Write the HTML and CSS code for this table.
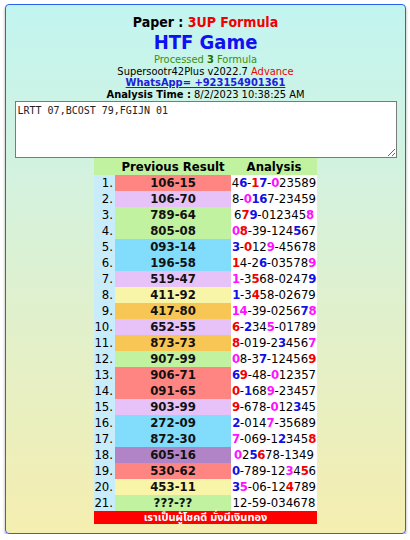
FILE: index.html
```html
<!DOCTYPE html>
<html>
<head>
<meta charset="utf-8">
<link rel="stylesheet" href="styles.css">
</head>
<body>
<div class="card">
  <div class="head">
    <div class="paper">Paper : <span class="red">3UP Formula</span></div>
    <div class="title">HTF Game</div>
    <div class="line green">Processed <b class="dg">3</b> Formula</div>
    <div class="line">Supersootr42Plus v2022.7 <span class="red">Advance</span></div>
    <div class="line"><a class="wa" href="#">WhatsApp= +923154901361</a></div>
    <div class="line"><b>Analysis Time :</b> 8/2/2023 10:38:25 AM</div>
  </div>
  <textarea class="box">LRTT 07,BCOST 79,FGIJN 01</textarea>
  <table class="tbl">
    <colgroup><col class="cn"><col class="cr"><col class="ca"></colgroup>
    <thead>
      <tr><th class="n"></th><th class="res">Previous Result</th><th class="an">Analysis</th></tr>
    </thead>
    <tbody>
      <tr><td class="n">1.</td><td class="res c-sal">106-15</td><td class="an">4<b class="b">6</b>-<b class="r">1</b><b class="b">7</b>-<b class="m">0</b>23589</td></tr>
      <tr><td class="n">2.</td><td class="res c-lav">106-70</td><td class="an">8-<b class="m">0</b><b class="b">16</b>7-23459</td></tr>
      <tr><td class="n">3.</td><td class="res c-grn">789-64</td><td class="an">6<b class="r">7</b><b class="b">9</b>-012345<b class="m">8</b></td></tr>
      <tr><td class="n">4.</td><td class="res c-grn">805-08</td><td class="an"><b class="m">0</b><b class="r">8</b>-39-124<b class="b">5</b>67</td></tr>
      <tr><td class="n">5.</td><td class="res c-blu">093-14</td><td class="an"><b class="b">3</b>-<b class="r">0</b>12<b class="m">9</b>-45678</td></tr>
      <tr><td class="n">6.</td><td class="res c-blu">196-58</td><td class="an"><b class="r">1</b>4-2<b class="b">6</b>-03578<b class="m">9</b></td></tr>
      <tr><td class="n">7.</td><td class="res c-lav">519-47</td><td class="an"><b class="m">1</b>-3<b class="r">5</b>68-0247<b class="b">9</b></td></tr>
      <tr><td class="n">8.</td><td class="res c-yel">411-92</td><td class="an"><b class="b">1</b>-3<b class="r">4</b>58-02679</td></tr>
      <tr><td class="n">9.</td><td class="res c-org">417-80</td><td class="an"><b class="m">14</b>-39-0256<b class="b">7</b><b class="m">8</b></td></tr>
      <tr><td class="n">10.</td><td class="res c-lav">652-55</td><td class="an"><b class="r">6</b>-<b class="b">2</b>34<b class="m">5</b>-01789</td></tr>
      <tr><td class="n">11.</td><td class="res c-org">873-73</td><td class="an"><b class="r">8</b>-019-2<b class="b">3</b>456<b class="m">7</b></td></tr>
      <tr><td class="n">12.</td><td class="res c-grn">907-99</td><td class="an"><b class="m">0</b>8-3<b class="b">7</b>-12456<b class="r">9</b></td></tr>
      <tr><td class="n">13.</td><td class="res c-sal">906-71</td><td class="an"><b class="b">6</b><b class="r">9</b>-48-<b class="m">0</b>12357</td></tr>
      <tr><td class="n">14.</td><td class="res c-sal">091-65</td><td class="an"><b class="r">0</b>-<b class="b">1</b>68<b class="m">9</b>-23457</td></tr>
      <tr><td class="n">15.</td><td class="res c-lav">903-99</td><td class="an"><b class="r">9</b>-678-<b class="m">0</b>12<b class="b">3</b>45</td></tr>
      <tr><td class="n">16.</td><td class="res c-blu">272-09</td><td class="an"><b class="b">2</b>-014<b class="m">7</b>-35689</td></tr>
      <tr><td class="n">17.</td><td class="res c-blu">872-30</td><td class="an"><b class="m">7</b>-069-1<b class="b">2</b>345<b class="r">8</b></td></tr>
      <tr><td class="n">18.</td><td class="res c-pur">605-16</td><td class="an"><b class="m">0</b>2<b class="b">5</b><b class="r">6</b>78-1349</td></tr>
      <tr><td class="n">19.</td><td class="res c-sal">530-62</td><td class="an"><b class="b">0</b>-789-12<b class="m">3</b>4<b class="r">5</b>6</td></tr>
      <tr><td class="n">20.</td><td class="res c-yel">453-11</td><td class="an"><b class="b">3</b><b class="m">5</b>-06-12<b class="r">4</b>789</td></tr>
      <tr><td class="n">21.</td><td class="res c-grn">???-??</td><td class="an">12-59-034678</td></tr>
      <tr><td class="foot" colspan="3">เราเป็นผู้โชคดี มั่งมีเงินทอง</td></tr>
    </tbody>
  </table>
</div>
</body>
</html>
```
FILE: styles.css
```css
html, body {
  margin: 0;
  padding: 0;
  background: #ffffff;
}
body {
  font-family: "DejaVu Sans Condensed", "DejaVu Sans", sans-serif;
  font-stretch: condensed;
  color: #000;
}
.card {
  margin: 4px 5px 0 5px;
  width: 399px;
  border: 1px solid #2a62f0;
  border-radius: 4px;
  background: linear-gradient(to bottom, #c2f5f0 0%, #d2f2e0 30%, #f5eeb0 100%);
  box-shadow: 0 2px 3px rgba(0, 0, 0, 0.35);
  padding: 9px 0 9px 0;
  display: flex;
  flex-direction: column;
  align-items: center;
}
.head {
  text-align: center;
  width: 100%;
}
.paper {
  font-size: 14px;
  font-weight: bold;
  line-height: 17px;
}
.red {
  color: #f00000;
}
.title {
  font-size: 20px;
  font-weight: bold;
  color: #1010f0;
  line-height: 23px;
}
.line {
  font-size: 11px;
  line-height: 11.5px;
}
.green {
  color: #3a9010;
}
.dg {
  color: #1e6e00;
}
.wa {
  color: #2020d8;
  font-weight: bold;
  text-decoration: underline;
}
.box {
  display: block;
  box-sizing: border-box;
  width: 382px;
  height: 57px;
  margin: 1px 0 0 0;
  padding: 3px 2px;
  border: 1px solid #7a7a7a;
  background: #fff;
  font-family: "DejaVu Sans Mono", "Liberation Mono", monospace;
  font-stretch: normal;
  font-size: 10px;
  color: #222;
  resize: vertical;
}
.tbl {
  border-collapse: collapse;
  border-spacing: 0;
  table-layout: fixed;
  width: 223px;
  margin-top: 0;
}
.cn { width: 21px; }
.cr { width: 116px; }
.ca { width: 86px; }
.tbl th, .tbl td {
  padding: 0;
  font-size: 13px;
  white-space: nowrap;
  overflow: visible;
}
.tbl th {
  background: #c0f2a0;
  height: 17px;
  line-height: 17px;
  font-weight: bold;
}
.tbl td {
  height: 16px;
  line-height: 16px;
}
td.n {
  background: #c8ecfa;
  text-align: right;
  padding-right: 2px;
}
.res {
  text-align: center;
}
td.res {
  font-weight: bold;
  color: #111;
}
.an {
  text-align: center;
}
.tbl td.an {
  background: #ffffff;
}
.an b {
  font-weight: bold;
  letter-spacing: -0.3px;
}
.r { color: #f20000; }
.b { color: #1010e6; }
.m { color: #ff10ff; }
.c-sal { background: #ff8582; }
.c-lav { background: #e6c2f8; }
.c-grn { background: #c0f2a0; }
.c-blu { background: #82dcfc; }
.c-yel { background: #f8f4a8; }
.c-org { background: #f8c654; }
.c-pur { background: #b084c6; }
.tbl td.foot {
  background: #ff0000;
  color: #fff;
  font-weight: bold;
  font-size: 11px;
  height: 13px;
  line-height: 13px;
  text-align: center;
  font-family: "Noto Sans Thai", "DejaVu Sans", "Noto Sans", sans-serif;
  font-stretch: normal;
}
```
